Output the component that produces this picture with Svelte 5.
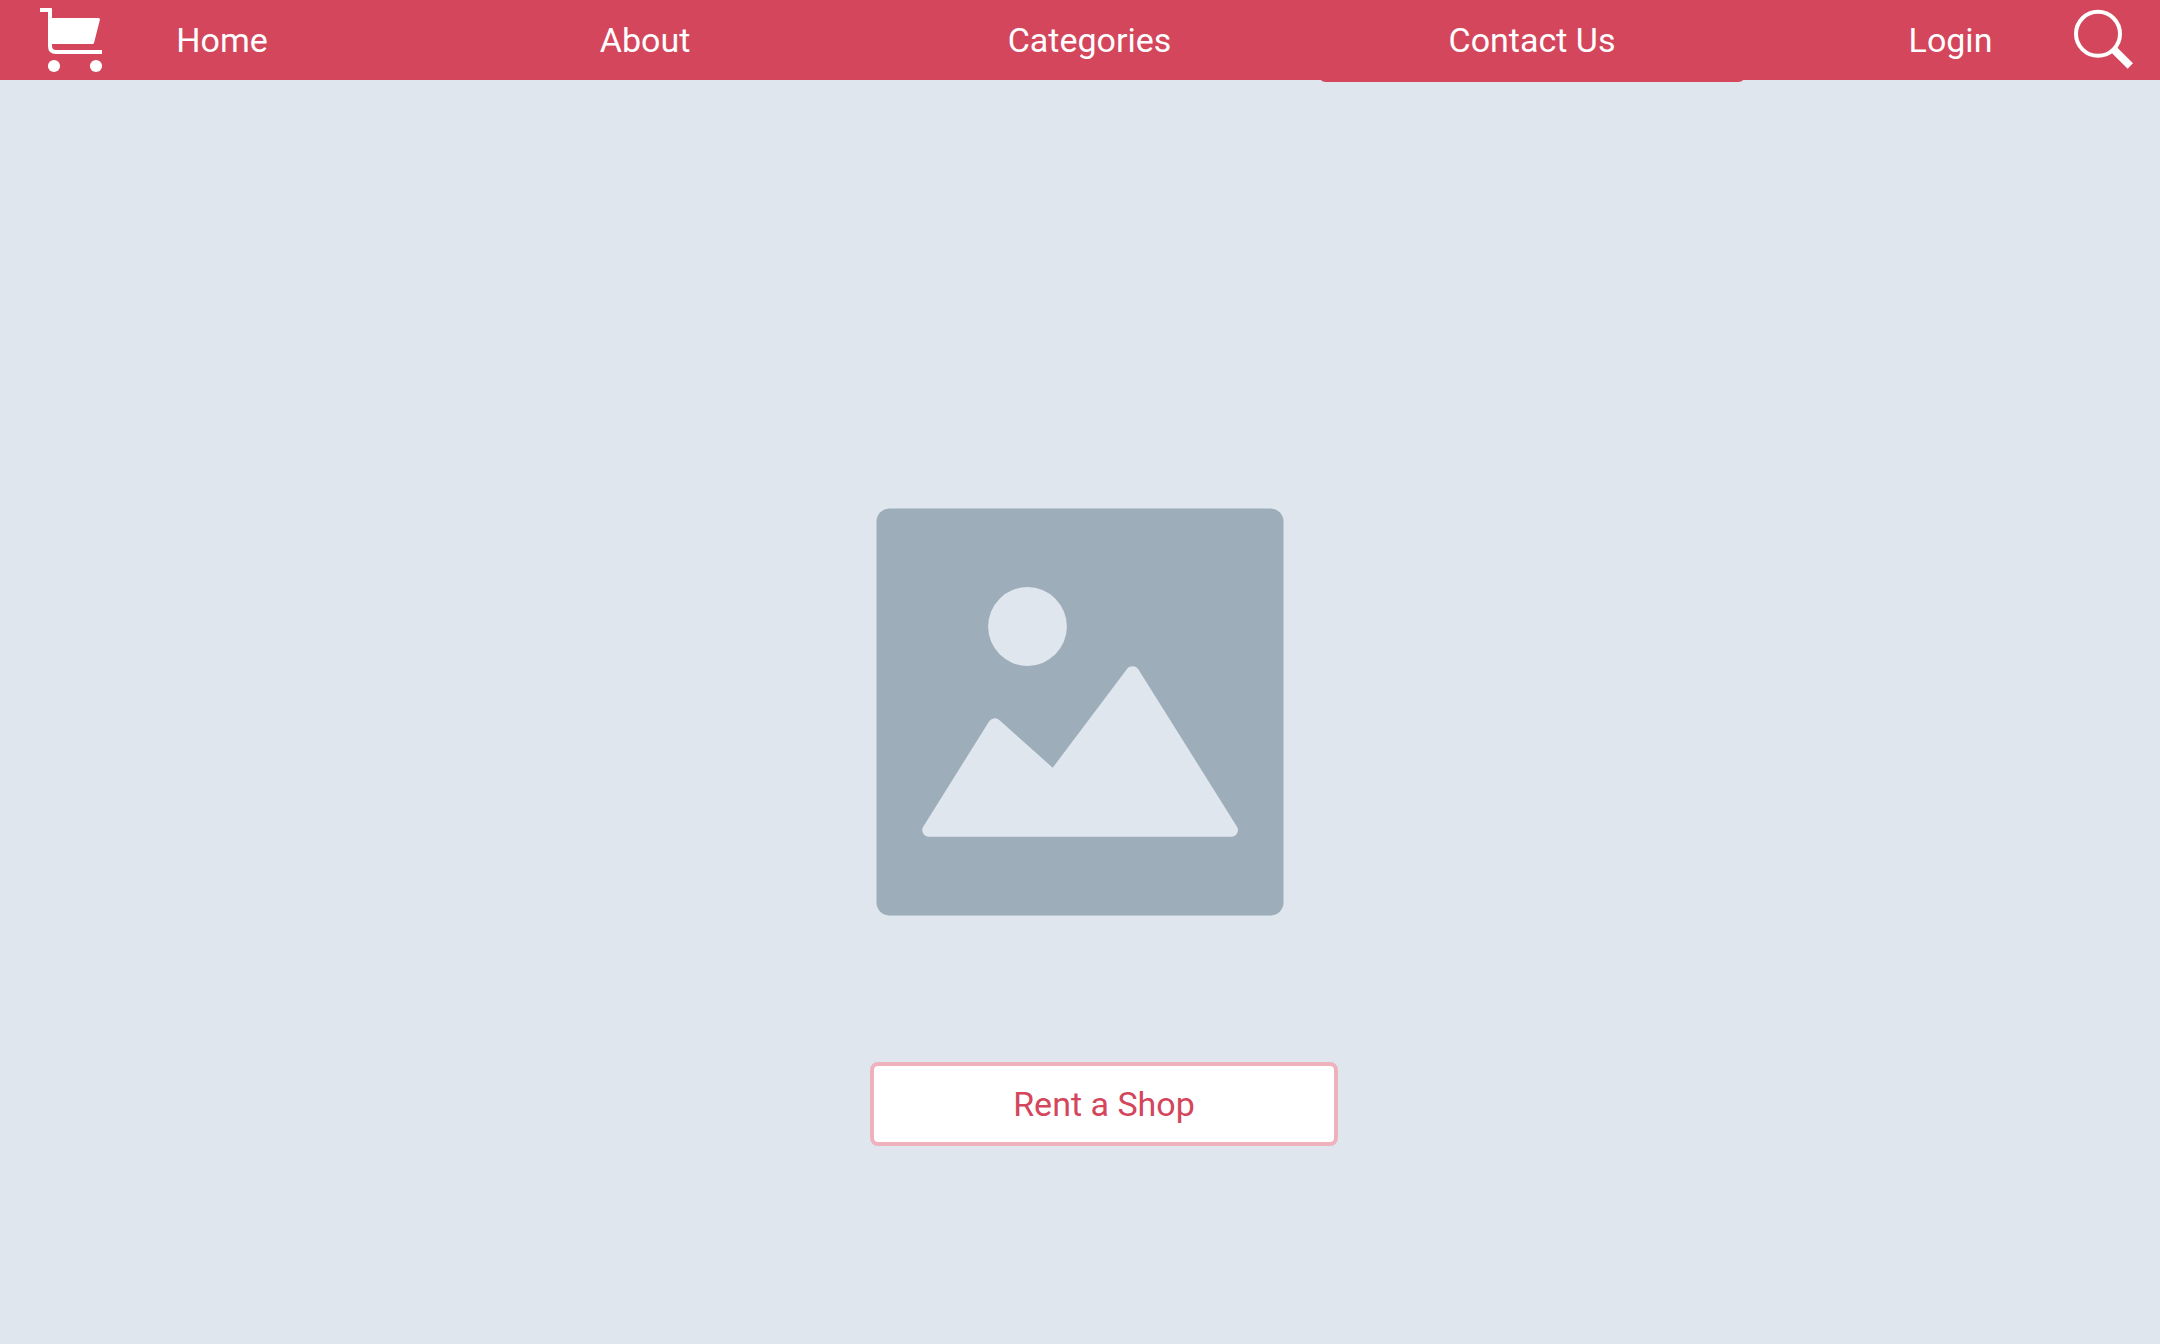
<script>
  const links = ['Home', 'About', 'Categories', 'Contact Us', 'Login'];
  let active = $state('Contact Us');
</script>

<div class="page">
  <header>
    <nav aria-label="Main">
      {#each links as link}
        <a href="#top" class:active={active === link} onclick={() => (active = link)}>{link}</a>
      {/each}
    </nav>
    <button class="icon" aria-label="Cart">
      <svg width="64" height="80" viewBox="40 0 64 80" fill="#fff" aria-hidden="true">
        <path d="M40 8H51Q52 8 52 9V18H98.5Q100.3 18 99.9 19.7L94 43Q93.7 44 92.5 44H52V46Q52 50 56 50H102V54H56Q48 54 48 46V12H40Z" />
        <circle cx="54" cy="66" r="6.1" />
        <circle cx="96" cy="66" r="6.1" />
      </svg>
    </button>
    <button class="icon search" aria-label="Search">
      <svg width="64" height="80" viewBox="212 0 64 80" fill="none" stroke="#fff" aria-hidden="true">
        <circle cx="238" cy="33.8" r="22" stroke-width="4" />
        <path d="M253 48.8L270.3 66" stroke-width="7.6" />
      </svg>
    </button>
  </header>

  <main>
    <svg class="picture" viewBox="0 0 408 408" role="img" aria-label="Image placeholder">
      <rect x="0.5" y="0.5" width="407" height="407" rx="13" fill="#9eadba" />
      <g fill="#dfe6ed">
        <circle cx="151.5" cy="118.5" r="39.4" />
        <path d="M47.2 318.7L112.7 214A6.8 6.8 0 0 1 123.3 212L176.7 259.7L251 161A6.8 6.8 0 0 1 262.3 161.3L361 318.7A6.6 6.6 0 0 1 355.5 328.7H52.8A6.6 6.6 0 0 1 47.2 318.7Z" />
      </g>
    </svg>
    <button class="rent">Rent a Shop</button>
  </main>
</div>

<style>
  :global(body) {
    background: #dfe6ed;
  }

  .page {
    min-height: 100vh;
    display: flex;
    flex-direction: column;
    font-family: Roboto, 'Liberation Sans', sans-serif;
    font-size: 34px;
    line-height: 40px;
  }

  header {
    display: grid;
    grid-template-columns: auto 1fr auto;
    grid-template-rows: 80px;
    background: #d3465b;
  }

  nav {
    grid-area: 1 / 1 / 2 / 4;
    display: grid;
    grid-template-columns: 424fr 422fr 467fr 418fr 419fr;
    padding-left: 10px;
  }

  a {
    display: flex;
    align-items: center;
    justify-content: center;
    height: 80px;
    color: #fff;
    text-decoration: none;
  }

  a.active {
    margin: 0 -5px;
    border-bottom: 2px solid #d3465b;
    border-radius: 8px;
    background: #d3465b;
  }

  .icon {
    grid-area: 1 / 1;
    margin-left: 40px;
    padding: 0;
    border: 0;
    background: none;
    cursor: pointer;
  }

  .icon svg {
    display: block;
  }

  .search {
    grid-area: 1 / 3;
    margin: 0 24px 0 0;
  }

  main {
    flex: 1;
    display: flex;
    flex-direction: column;
    align-items: center;
    gap: 146px;
    padding-top: 428px;
  }

  .picture {
    width: 408px;
    height: 408px;
  }

  .rent {
    box-sizing: border-box;
    width: 468px;
    height: 84px;
    margin-left: 48px;
    border: 4px solid #efb2bc;
    border-radius: 8px;
    background: #fff;
    color: #d3465b;
    font: inherit;
    cursor: pointer;
  }
</style>
